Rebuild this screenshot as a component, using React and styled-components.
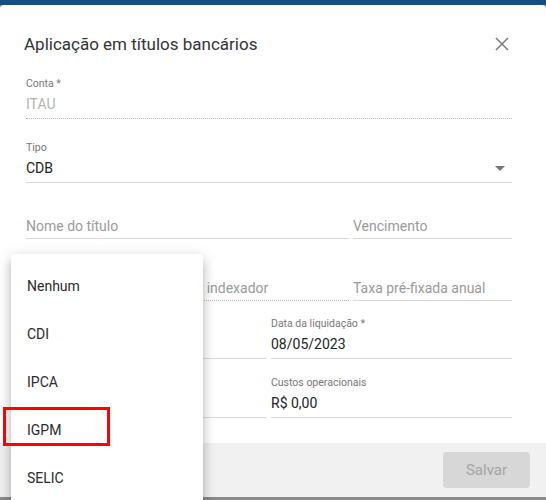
import React from 'react';
import styled, { createGlobalStyle } from 'styled-components';

const GlobalStyle = createGlobalStyle`
  html, body {
    margin: 0;
    padding: 0;
    background: #8b8b8b;
    font-family: Roboto, "Liberation Sans", Arial, sans-serif;
  }
`;

const Page = styled.div`
  position: relative;
  width: 546px;
  height: 500px;
  overflow: hidden;
  background: #8b8b8b;
  display: flex;
  flex-direction: column;
`;

const TopBar = styled.div`
  height: 5px;
  background: #134f80;
  flex-shrink: 0;
`;

const Dialog = styled.div`
  height: 492px;
  background: #fff;
  border-radius: 4px 4px 0 0;
  display: flex;
  flex-direction: column;
  overflow: hidden;
`;

const Header = styled.div`
  display: flex;
  align-items: center;
  justify-content: space-between;
  padding: 24px 32px 0 24px;
  height: 30px;
  h2 {
    margin: 0;
    font-size: 17px;
    font-weight: 400;
    line-height: 30px;
    color: #333;
  }
`;

const CloseButton = styled.button`
  width: 24px;
  height: 24px;
  padding: 0;
  border: none;
  background: transparent;
  display: flex;
  align-items: center;
  justify-content: center;
  svg {
    width: 16px;
    height: 16px;
    stroke: #7a7a7a;
    stroke-width: 1.5;
  }
`;

const Content = styled.div`
  flex: 1;
  padding: 18px 34px 0 26px;
`;

const Row = styled.div`
  display: grid;
  grid-template-columns: ${(p) => p.$cols || '1fr'};
  column-gap: 4px;
  margin-top: ${(p) => p.$mt || 0}px;
`;

const Field = styled.div`
  display: flex;
  flex-direction: column;
  min-width: 0;
`;

const Label = styled.div`
  font-size: 10.5px;
  line-height: 13px;
  height: 13px;
  margin-bottom: 5px;
  color: #777;
  white-space: nowrap;
`;

const Value = styled.div`
  display: flex;
  align-items: center;
  justify-content: space-between;
  font-size: 14px;
  line-height: 19px;
  padding: ${(p) => (p.$placeholder ? '20px 0 2px' : '0 0 4px')};
  color: ${(p) => (p.$placeholder ? '#9a9a9a' : p.$disabled ? '#b4b4b4' : '#222')};
  border-bottom: 1px ${(p) => (p.$dotted ? 'dotted #b9b9b9' : 'solid #d9d9d9')};
  white-space: nowrap;
  overflow: hidden;
`;

const Arrow = styled.svg`
  width: 10px;
  height: 5px;
  margin-right: 7px;
  fill: #767676;
`;

const Footer = styled.div`
  height: 54px;
  flex-shrink: 0;
  background: #f1f1f1;
  display: flex;
  align-items: center;
  justify-content: flex-end;
  padding: 0 16px;
`;

const SaveButton = styled.button`
  width: 87px;
  height: 36px;
  border: none;
  border-radius: 4px;
  background: #d7d7d7;
  color: #a5a5a5;
  font-family: inherit;
  font-size: 15px;
`;

const Menu = styled.ul`
  position: absolute;
  top: 254px;
  left: 11px;
  width: 192px;
  margin: 0;
  padding: 8px 0;
  list-style: none;
  background: #fff;
  border-radius: 4px;
  box-shadow: 0 5px 5px -3px rgba(0, 0, 0, 0.2), 0 8px 10px 1px rgba(0, 0, 0, 0.14),
    0 3px 14px 2px rgba(0, 0, 0, 0.12);
  li {
    height: 48px;
    display: flex;
    align-items: center;
    padding: 0 16px;
    font-size: 14px;
    color: #2b2b2b;
  }
`;

const Highlight = styled.div`
  position: absolute;
  top: 407px;
  left: 3px;
  width: 101px;
  height: 33px;
  border: 3px solid #ff0000;
`;

const indexadores = ['Nenhum', 'CDI', 'IPCA', 'IGPM', 'SELIC'];

export default function App() {
  return (
    <Page>
      <GlobalStyle />
      <TopBar />
      <Dialog>
        <Header>
          <h2>Aplicação em títulos bancários</h2>
          <CloseButton>
            <svg viewBox="0 0 16 16">
              <path d="M2 2L14 14M14 2L2 14" />
            </svg>
          </CloseButton>
        </Header>
        <Content>
          <Row>
            <Field>
              <Label>Conta *</Label>
              <Value $disabled $dotted>ITAU</Value>
            </Field>
          </Row>
          <Row $mt={22}>
            <Field>
              <Label>Tipo</Label>
              <Value>
                CDB
                <Arrow viewBox="0 0 10 5">
                  <polygon points="0,0 10,0 5,5" />
                </Arrow>
              </Value>
            </Field>
          </Row>
          <Row $mt={14} $cols="1fr 159px">
            <Field>
              <Value $placeholder>Nome do título</Value>
            </Field>
            <Field>
              <Value $placeholder>Vencimento</Value>
            </Field>
          </Row>
          <Row $mt={20} $cols="1fr 159px">
            <Field>
              <Value $placeholder $dotted>Rentabilidade pós-fixada por indexador</Value>
            </Field>
            <Field>
              <Value $placeholder>Taxa pré-fixada anual</Value>
            </Field>
          </Row>
          <Row $mt={16} $cols="1fr 1fr">
            <Field>
              <Label>Data da aplicação *</Label>
              <Value>08/05/2023</Value>
            </Field>
            <Field>
              <Label>Data da liquidação *</Label>
              <Value>08/05/2023</Value>
            </Field>
          </Row>
          <Row $mt={17} $cols="1fr 1fr">
            <Field>
              <Label>Valor aplicado *</Label>
              <Value>R$ 0,00</Value>
            </Field>
            <Field>
              <Label>Custos operacionais</Label>
              <Value>R$ 0,00</Value>
            </Field>
          </Row>
        </Content>
        <Footer>
          <SaveButton disabled>Salvar</SaveButton>
        </Footer>
      </Dialog>
      <Menu>
        {indexadores.map((item) => (
          <li key={item}>{item}</li>
        ))}
      </Menu>
      <Highlight />
    </Page>
  );
}
